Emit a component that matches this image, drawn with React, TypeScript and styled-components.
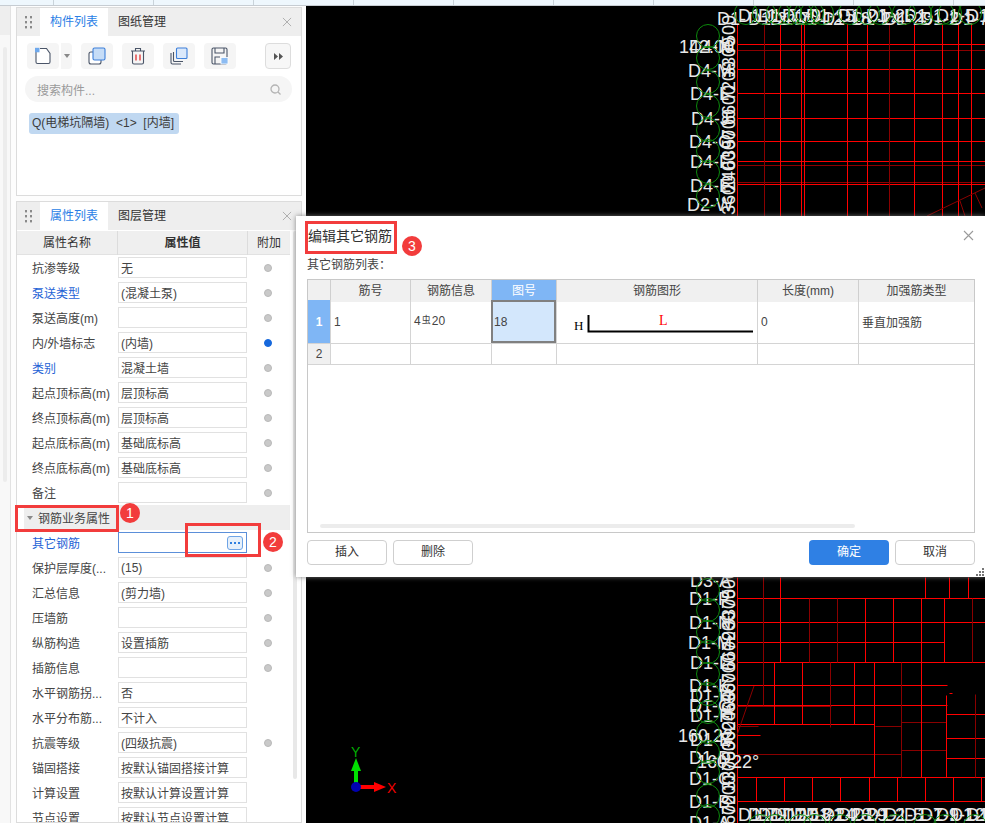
import React from "react";
import styled, { createGlobalStyle } from "styled-components";

const FONT = `"Liberation Sans", "Noto Sans CJK SC", sans-serif`;

const GlobalStyle = createGlobalStyle`
  html, body {
    margin: 0;
    padding: 0;
    background: #fff;
  }
  body {
    font-family: ${FONT};
    font-size: 12px;
    color: #333;
  }
  * {
    box-sizing: border-box;
  }
`;

const Page = styled.div`
  position: relative;
  width: 985px;
  height: 823px;
  overflow: hidden;
  display: flex;
  flex-direction: column;
`;

const TopStrip = styled.div`
  height: 6px;
  flex: none;
  background: repeating-linear-gradient(to right, #eef7fd 0, #eef7fd 53px, #c9d3da 53px, #c9d3da 54px, #eef7fd 54px, #eef7fd 100px);
  border-bottom: 1px solid #c6ccd2;
`;

const Main = styled.div`
  flex: 1;
  min-height: 0;
  display: flex;
`;

const Rail = styled.div`
  width: 11px;
  flex: none;
  background: #f8f8f8;
  border-right: 1px solid #e2e2e2;
`;

const RailHead = styled.div`
  height: 29px;
  background: #eeeeee;
`;

const RailThumb = styled.div`
  width: 4px;
  height: 435px;
  margin: 12px 0 0 3px;
  border-radius: 2px;
  background: #ececec;
`;

const Sidebar = styled.div`
  width: 295px;
  flex: none;
  padding: 1px 4px 0 5px;
  display: flex;
  flex-direction: column;
  gap: 5px;
  background: #fdfdfd;
`;

const Panel = styled.section<{ $grow?: boolean }>`
  display: flex;
  flex-direction: column;
  border: 1px solid #dcdcdc;
  background: #fff;
  ${(p) => (p.$grow ? "flex: 1; min-height: 0; overflow: hidden;" : "height: 189px; flex: none;")}
`;

const PanelHeader = styled.div`
  height: 28px;
  flex: none;
  display: flex;
  align-items: center;
  background: #eeeeee;
`;

const Grip = styled.div`
  width: 23px;
  display: flex;
  justify-content: center;
  color: #8a8a8a;
`;

const Tab = styled.div<{ $active?: boolean }>`
  width: 68px;
  height: 28px;
  line-height: 28px;
  text-align: center;
  font-size: 12px;
  background: ${(p) => (p.$active ? "#fff" : "transparent")};
  color: ${(p) => (p.$active ? "#2a7ee6" : "#333")};
`;

const HeaderClose = styled.div`
  margin-left: auto;
  margin-right: 9px;
  display: flex;
  color: #b0b0b0;
`;

const Toolbar = styled.div`
  display: flex;
  align-items: center;
  height: 26px;
  margin: 7px 0 0 10px;
  gap: 9px;
`;

const ToolButton = styled.div`
  width: 32px;
  height: 26px;
  display: flex;
  align-items: center;
  justify-content: center;
  border-radius: 4px;
  background: #f5f5f5;
`;

const SplitArrow = styled.div`
  width: 12px;
  height: 26px;
  margin-left: -8px;
  display: flex;
  align-items: center;
  justify-content: center;
  border-left: 1px solid #fff;
  border-radius: 0 4px 4px 0;
  background: #f5f5f5;
`;

const MoreButton = styled.div`
  width: 26px;
  height: 26px;
  margin-left: auto;
  margin-right: 10px;
  display: flex;
  align-items: center;
  justify-content: center;
  border: 1px solid #dddddd;
  border-radius: 4px;
  background: #f7f7f7;
`;

const SearchBox = styled.div`
  height: 26px;
  margin: 7px 9px 0 8px;
  padding: 0 11px 0 12px;
  display: flex;
  align-items: center;
  justify-content: space-between;
  border-radius: 13px;
  background: #f5f5f5;
  color: #9a9a9a;
`;

const Chip = styled.div`
  align-self: flex-start;
  height: 21px;
  margin: 11px 0 0 12px;
  padding: 0 5px 0 3px;
  line-height: 21px;
  font-size: 12px;
  white-space: pre;
  border-radius: 3px;
  background: #c0d8f1;
  color: #3c3c3c;
`;

const PropBody = styled.div`
  flex: 1;
  min-height: 0;
  display: flex;
`;

const PropTable = styled.div`
  width: 273px;
  flex: none;
`;

const PropHead = styled.div`
  height: 24px;
  margin-top: 1px;
  display: grid;
  grid-template-columns: 100px 130px 43px;
  background: #efefef;
  border-bottom: 1px solid #e2e2e2;
`;

const HeadCell = styled.div<{ $bold?: boolean }>`
  line-height: 24px;
  text-align: center;
  font-size: 12px;
  font-weight: ${(p) => (p.$bold ? 700 : 400)};
  border-left: 1px solid #dcdcdc;
  &:first-child {
    border-left: 0;
  }
`;

const PropRow = styled.div`
  height: 25px;
  display: grid;
  grid-template-columns: 101px 129px 43px;
  align-items: center;
`;

const PropName = styled.div<{ $link?: boolean }>`
  padding-left: 15px;
  font-size: 12px;
  white-space: nowrap;
  color: ${(p) => (p.$link ? "#1f63d6" : "#444")};
`;

const PropValue = styled.div<{ $focus?: boolean }>`
  height: 21px;
  padding: 0 2px;
  display: flex;
  align-items: center;
  justify-content: space-between;
  font-size: 12px;
  white-space: nowrap;
  color: #444;
  border: 1px solid ${(p) => (p.$focus ? "#5b8fd9" : "#e1e1e1")};
  background: #fff;
`;

const EllipsisButton = styled.div`
  width: 16px;
  height: 14px;
  margin-right: 1px;
  display: flex;
  align-items: center;
  justify-content: center;
  border: 1px solid #6ea4e6;
  border-radius: 3px;
  background: #e6f0fb;
`;

const Dot = styled.div<{ $on?: boolean }>`
  width: 8px;
  height: 8px;
  margin-left: 17px;
  border-radius: 50%;
  background: ${(p) => (p.$on ? "#1668dc" : "#c9c9c9")};
  border: 1px solid ${(p) => (p.$on ? "#1668dc" : "#b9b9b9")};
`;

const SectionRow = styled.div`
  height: 25px;
  margin-left: 7px;
  display: flex;
  align-items: center;
  gap: 5px;
  padding-left: 3px;
  width: 266px;
  font-size: 12px;
  background: #eeeeee;
  color: #444;
`;

const SectionCaret = styled.div`
  width: 0;
  height: 0;
  border-left: 3px solid transparent;
  border-right: 3px solid transparent;
  border-top: 4px solid #8a8a8a;
`;

const PropScroll = styled.div`
  width: 4px;
  height: 548px;
  margin: 1px 0 0 3px;
  border-radius: 2px;
  background: #e8e8e8;
`;

const Canvas = styled.div`
  flex: 1;
  min-width: 0;
  background: #000;
`;

const CanvasSvg = styled.svg`
  display: block;
  width: 679px;
  height: 817px;
`;

const Dialog = styled.div`
  position: absolute;
  left: 296px;
  top: 216px;
  width: 689px;
  height: 361px;
  padding: 0 10px 0 11px;
  display: flex;
  flex-direction: column;
  background: #fff;
  box-shadow: 0 0 5px rgba(120, 120, 120, 0.9);
`;

const DialogHeader = styled.div`
  height: 38px;
  flex: none;
  display: flex;
  align-items: center;
  justify-content: space-between;
  padding: 0 1px 0 1px;
  font-size: 14px;
  color: #333;
`;

const DialogClose = styled.div`
  display: flex;
  margin-top: 1px;
  color: #9a9a9a;
`;

const ListLabel = styled.div`
  height: 25px;
  font-size: 12px;
  line-height: 22px;
  color: #444;
`;

const Sheet = styled.div`
  position: relative;
  height: 254px;
  flex: none;
  border: 1px solid #c8c8c8;
`;

const SheetRow = styled.div<{ $height: number }>`
  height: ${(p) => p.$height}px;
  display: grid;
  grid-template-columns: 22px 80px 81px 65px 201px 101px 1fr;
  border-bottom: 1px solid #d4d4d4;
`;

const SheetHead = styled.div<{ $active?: boolean }>`
  line-height: 22px;
  text-align: center;
  font-size: 12px;
  border-left: 1px solid #cfcfcf;
  background: ${(p) => (p.$active ? "#7fb6f5" : "#f0f0f0")};
  color: ${(p) => (p.$active ? "#fff" : "#444")};
  &:first-child {
    border-left: 0;
  }
`;

const RowIndex = styled.div<{ $active?: boolean }>`
  display: flex;
  align-items: center;
  justify-content: center;
  font-size: 12px;
  font-weight: ${(p) => (p.$active ? 700 : 400)};
  background: ${(p) => (p.$active ? "#7fb6f5" : "#f0f0f0")};
  color: ${(p) => (p.$active ? "#fff" : "#444")};
`;

const SheetCell = styled.div<{ $selected?: boolean; $raised?: boolean }>`
  display: flex;
  align-items: center;
  padding-left: ${(p) => (p.$selected ? 1 : 3)}px;
  padding-bottom: ${(p) => (p.$raised ? 2 : 0)}px;
  font-size: 12px;
  color: #444;
  border-left: ${(p) => (p.$selected ? "0" : "1px solid #d4d4d4")};
  ${(p) => (p.$selected ? "border: 2px solid #808080; background: #d3e7fc;" : "")}
`;

const BarSymbol = styled.span`
  font-size: 9px;
  margin: 0 1px;
  position: relative;
  top: -1px;
`;

const ShapeCell = styled.div`
  position: relative;
  border-left: 1px solid #d4d4d4;
`;

const ShapeSvg = styled.svg`
  display: block;
  width: 200px;
  height: 43px;
`;

const SheetScroll = styled.div`
  position: absolute;
  left: 12px;
  bottom: 4px;
  width: 535px;
  height: 4px;
  border-radius: 2px;
  background: #ececec;
`;

const DialogFooter = styled.div`
  margin-top: 7px;
  display: flex;
  gap: 6px;
`;

const FooterButton = styled.div<{ $primary?: boolean; $pushRight?: boolean }>`
  width: 80px;
  height: 25px;
  text-align: center;
  font-size: 12px;
  border-radius: 4px;
  ${(p) => (p.$pushRight ? "margin-left: auto;" : "")}
  background: ${(p) => (p.$primary ? "#2f80e4" : "#fff")};
  color: ${(p) => (p.$primary ? "#fff" : "#333")};
  border: ${(p) => (p.$primary ? "0" : "1px solid #cfcfcf")};
  line-height: ${(p) => (p.$primary ? 25 : 23)}px;
`;

const ResizeGrip = styled.svg`
  position: absolute;
  right: 1px;
  bottom: 1px;
`;

const Callout = styled.div<{ $x: number; $y: number; $w: number; $h: number }>`
  position: absolute;
  left: ${(p) => p.$x}px;
  top: ${(p) => p.$y}px;
  width: ${(p) => p.$w}px;
  height: ${(p) => p.$h}px;
  border: 3px solid #f23c3c;
`;

const Badge = styled.div<{ $x: number; $y: number }>`
  position: absolute;
  left: ${(p) => p.$x}px;
  top: ${(p) => p.$y}px;
  width: 20px;
  height: 20px;
  line-height: 20px;
  text-align: center;
  font-size: 14px;
  border-radius: 50%;
  background: #f23c3c;
  color: #fff;
`;

const CloseIcon = ({ size = 11 }: { size?: number }) => (
  <svg width={size} height={size} viewBox="0 0 11 11">
    <path d="M1 1l9 9M10 1l-9 9" stroke="currentColor" strokeWidth="1.1" fill="none" />
  </svg>
);

const GripIcon = () => (
  <svg width="7" height="13" viewBox="0 0 7 13" fill="currentColor">
    {[0, 5, 10].map((y) => (
      <g key={y}>
        <rect x="0" y={y} width="2" height="2.4" />
        <rect x="5" y={y} width="2" height="2.4" />
      </g>
    ))}
  </svg>
);

const NewIcon = () => (
  <svg width="18" height="18" viewBox="0 0 18 18">
    <path d="M2 3.5V15a1.5 1.5 0 0 0 1.5 1.500h11a1.5 1.5 0 0 0 1.500-1.500V6.500L12.500 1.500H6" fill="#fff" stroke="#4a5568" strokeWidth="1.100" />
    <path d="M1 0.800h4.500v4.500H1z" fill="#6ea8ec" />
  </svg>
);

const CopyIcon = () => (
  <svg width="18" height="18" viewBox="0 0 18 18">
    <rect x="1" y="5" width="12" height="12" rx="2" fill="#fff" stroke="#4a5568" strokeWidth="1.100" />
    <rect x="5" y="1" width="12" height="12" rx="1.500" fill="#c5dcf7" stroke="#3d7fd9" strokeWidth="1.100" />
  </svg>
);

const TrashIcon = () => (
  <svg width="16" height="18" viewBox="0 0 16 18" fill="none">
    <path d="M1 4h14M5.500 4V1.500h5V4" stroke="#4a5568" strokeWidth="1.100" />
    <path d="M2.500 4v11.500a1.500 1.500 0 0 0 1.500 1.500h8a1.500 1.500 0 0 0 1.500-1.500V4" stroke="#4a5568" strokeWidth="1.100" />
    <path d="M6 7.500v6M10 7.500v6" stroke="#e02020" strokeWidth="1.200" />
  </svg>
);

const StackIcon = () => (
  <svg width="18" height="18" viewBox="0 0 18 18" fill="none">
    <path d="M1 6v9.500A1.500 1.500 0 0 0 2.500 17H11" stroke="#4a5568" strokeWidth="1.100" />
    <path d="M3.500 5v8.500A1 1 0 0 0 4.500 14.500H13" stroke="#4a5568" strokeWidth="1.100" />
    <rect x="6.500" y="1" width="10.500" height="10.500" rx="1" fill="#dbe9fb" stroke="#3d7fd9" strokeWidth="1.100" />
  </svg>
);

const SaveIcon = () => (
  <svg width="18" height="18" viewBox="0 0 18 18" fill="none">
    <rect x="1" y="1" width="15" height="16" rx="1.500" stroke="#4a5568" strokeWidth="1.100" />
    <path d="M4 1v5h9V1M4 17v-7h5" stroke="#4a5568" strokeWidth="1.100" />
    <rect x="10" y="10.500" width="7" height="6.500" fill="#8dbcf2" stroke="#fff" strokeWidth="0.800" />
  </svg>
);

const FastForwardIcon = () => (
  <svg width="9" height="7" viewBox="0 0 9 7" fill="#555">
    <path d="M0 0l4 3.500L0 7zM5 0l4 3.500L5 7z" />
  </svg>
);

const SearchIcon = () => (
  <svg width="11" height="11" viewBox="0 0 11 11" fill="none" stroke="#b4b4b4" strokeWidth="1.300">
    <circle cx="5" cy="5" r="4" />
    <path d="M8 8l2.500 2.500" />
  </svg>
);

type Prop = {
  name: string;
  value?: string;
  link?: boolean;
  dot?: "on" | "off";
};

const PROPS_TOP: Prop[] = [
  { name: "抗渗等级", value: "无", dot: "off" },
  { name: "泵送类型", value: "(混凝土泵)", link: true, dot: "off" },
  { name: "泵送高度(m)", dot: "off" },
  { name: "内/外墙标志", value: "(内墙)", dot: "on" },
  { name: "类别", value: "混凝土墙", link: true, dot: "off" },
  { name: "起点顶标高(m)", value: "层顶标高", dot: "off" },
  { name: "终点顶标高(m)", value: "层顶标高", dot: "off" },
  { name: "起点底标高(m)", value: "基础底标高", dot: "off" },
  { name: "终点底标高(m)", value: "基础底标高", dot: "off" },
  { name: "备注", dot: "off" },
];

const PROPS_BOTTOM: Prop[] = [
  { name: "保护层厚度(...", value: "(15)", dot: "off" },
  { name: "汇总信息", value: "(剪力墙)", dot: "off" },
  { name: "压墙筋", dot: "off" },
  { name: "纵筋构造", value: "设置插筋", dot: "off" },
  { name: "插筋信息", dot: "off" },
  { name: "水平钢筋拐...", value: "否" },
  { name: "水平分布筋...", value: "不计入" },
  { name: "抗震等级", value: "(四级抗震)", dot: "off" },
  { name: "锚固搭接", value: "按默认锚固搭接计算" },
  { name: "计算设置", value: "按默认计算设置计算" },
  { name: "节点设置", value: "按默认节点设置计算" },
];

const PropLine = ({ prop }: { prop: Prop }) => (
  <PropRow>
    <PropName $link={prop.link}>{prop.name}</PropName>
    <PropValue>{prop.value}</PropValue>
    {prop.dot ? <Dot $on={prop.dot === "on"} /> : <span />}
  </PropRow>
);

// CAD drawing data, in page coordinates
const RED = "#ff0000";
const DARK = "#8a0000";
const GREEN = "#0c8a0c";

const TOP_H: [number, string][] = [
  [44, RED], [50, DARK], [69, RED], [93, RED], [118, RED], [141, RED],
  [161, RED], [165, DARK], [182, DARK], [184, RED],
];
const TOP_V: [number, string][] = [
  [737, RED], [764, DARK], [780, RED], [801, RED], [804, RED], [847, RED],
  [867, RED], [889, DARK], [914, RED], [942, RED], [958, RED], [971, RED],
];

// x1, y1, x2, y2, colour
const LOW_LINES: [number, number, number, number, string][] = [
  [737, 577, 737, 823, RED],
  [737, 598, 985, 598, RED], [737, 622, 985, 622, RED], [737, 642, 944, 642, RED],
  [737, 662, 985, 662, RED], [737, 685, 947, 685, RED], [737, 705, 947, 705, RED],
  [737, 706, 831, 706, DARK], [737, 724, 874, 724, RED], [737, 726, 758, 726, DARK],
  [737, 735, 760, 735, RED], [737, 754, 901, 754, DARK], [875, 726, 901, 726, DARK],
  [901, 722, 946, 722, DARK], [901, 750, 946, 750, DARK], [946, 714, 985, 714, RED],
  [946, 738, 985, 738, RED], [946, 758, 985, 758, RED], [737, 777, 985, 777, RED],
  [737, 801, 985, 801, RED],
  [763, 577, 763, 705, DARK], [780, 577, 780, 662, RED], [809, 598, 809, 662, DARK],
  [837, 598, 837, 662, DARK], [865, 598, 865, 662, RED], [893, 598, 893, 662, RED],
  [921, 598, 921, 662, RED], [944, 598, 944, 662, RED], [972, 598, 972, 662, DARK],
  [925, 577, 925, 598, RED], [949, 577, 949, 598, RED], [968, 577, 968, 598, RED],
  [774, 662, 774, 724, RED], [802, 662, 802, 724, RED], [830, 662, 830, 727, DARK],
  [854, 662, 854, 724, RED], [874, 662, 874, 777, RED], [901, 662, 901, 777, DARK],
  [921, 662, 921, 777, RED], [946, 695, 946, 777, RED], [975, 694, 975, 777, DARK],
  [756, 801, 756, 777, RED], [784, 777, 784, 801, RED], [812, 777, 812, 801, RED],
  [840, 777, 840, 801, RED], [869, 777, 869, 801, RED], [897, 777, 897, 801, RED],
  [925, 777, 925, 801, RED], [953, 777, 953, 801, RED], [981, 777, 981, 801, RED],
  [949, 693, 952, 693, RED],
];

const LABELS_TOP: [string, number, number][] = [
  ["142.00", 679, 53], ["D4-N", 689, 53], ["D4-M", 688, 77], ["D4-L", 690, 100],
  ["D4-J", 691, 125], ["D4-G", 689, 148], ["D4-F", 690, 168], ["D4-E", 690, 192],
  ["D2-W", 687, 211],
];

const LABELS_LOW: [string, number, number][] = [
  ["D3-A", 690, 587], ["D1-P", 689, 605], ["D1-N", 689, 629], ["D1-M", 688, 649],
  ["D1-L", 690, 669], ["D1-K", 689, 692], ["D1-H", 690, 702], ["D1-G", 689, 712],
  ["D1-F", 690, 722], ["160.22", 678, 742], ["D1-E", 690, 746], ["160.22°", 697, 768],
  ["D1-D", 689, 764], ["D1-C", 689, 785], ["D1-B", 689, 808], ["D1-A", 689, 829],
];

const SIDE_Y = [36, 58, 82, 106, 130, 151, 172, 196, 590, 610, 632, 652, 674, 694, 712, 732, 752, 772, 796, 816];
const SIDE_NUMS = ["7500", "3300", "7200", "6600", "5700", "6300", "2400", "3600"];
const TOP_NUMS = ["D1-1", "D1-2", "D1-5", "D1-7", "D1-9", "D1-12", "D1-15", "D1-18", "D1-21", "D1-24", "D1-26", "D1-29"];
const TOP_X = [738, 748, 758, 770, 782, 794, 806, 822, 838, 852, 866, 884, 904, 920, 936, 950, 966];
const TOP_CIRCLES = [746, 764, 778, 790, 800, 806, 812, 822, 850, 868, 880, 904, 920, 942, 950, 970];
const BOTTOM_CIRCLES = [760, 775, 800, 815, 840, 865, 895, 925, 945, 975];

const CadDrawing = () => (
  <CanvasSvg viewBox="306 6 679 817">
    {/* half-pixel offsets keep the 1px lines on a single pixel row */}
    <g strokeWidth="1">
      {TOP_H.map(([y, c]) => (
        <line key={y} x1="737" y1={y + 0.5} x2="985" y2={y + 0.5} stroke={c} />
      ))}
      {TOP_V.map(([x, c]) => (
        <line key={x} x1={x + 0.5} y1="24" x2={x + 0.5} y2="216" stroke={c} />
      ))}
      {LOW_LINES.map(([x1, y1, x2, y2, c], i) => (
        <line key={i} x1={x1 + 0.5} y1={y1 + 0.5} x2={x2 + 0.5} y2={y2 + 0.5} stroke={c} />
      ))}
    </g>
    <path d="M927 216l58-28M960 201l5 15M975 193l7 15M737 735l17-49" stroke={DARK} fill="none" />
    <g fill="#e8e8e8" fontFamily="Liberation Sans, sans-serif" fontSize="18">
      {[...LABELS_TOP, ...LABELS_LOW].map(([t, x, y]) => (
        <text key={t + y} x={x} y={y}>
          {t}
        </text>
      ))}
      <text x="717" y="25">D1-</text>
      {TOP_X.map((x, i) => (
        <text key={x} x={x} y={i % 2 ? 25 : 22}>
          {TOP_NUMS[i % TOP_NUMS.length]}
        </text>
      ))}
      {TOP_X.map((x, i) => (
        <text key={x} x={x} y="821">
          {TOP_NUMS[(i + 3) % TOP_NUMS.length]}
        </text>
      ))}
      {SIDE_Y.map((y, i) => (
        <text key={i} transform={`translate(735 ${y + 19}) rotate(-90)`}>
          {SIDE_NUMS[i % SIDE_NUMS.length]}
        </text>
      ))}
    </g>
    <g fill="none" stroke={GREEN} strokeWidth="1">
      {SIDE_Y.map((y, i) => (
        <circle key={i} cx="708" cy={y} r="11.500" />
      ))}
      {TOP_CIRCLES.map((x, i) => (
        <circle key={i} cx={x} cy="13" r="11.500" />
      ))}
      {BOTTOM_CIRCLES.map((x, i) => (
        <circle key={i} cx={x} cy="826" r="11.500" />
      ))}
    </g>
    <line x1="356" y1="787" x2="356" y2="768" stroke="#00e000" strokeWidth="4" />
    <path d="M356 758l5 13h-10z" fill="#00e000" />
    <line x1="356" y1="787" x2="376" y2="787" stroke="#ff0000" strokeWidth="4" />
    <path d="M386 787l-12 5v-10z" fill="#ff0000" />
    <circle cx="356" cy="787" r="5" fill="#0000b0" />
    <text x="351" y="757" fontSize="14" fill="#00b000" fontFamily="Liberation Sans, sans-serif">Y</text>
    <text x="387" y="793" fontSize="14" fill="#f00000" fontFamily="Liberation Sans, sans-serif">X</text>
  </CanvasSvg>
);

export default function App() {
  return (
    <Page>
      <GlobalStyle />
      <TopStrip />
      <Main>
        <Rail>
          <RailHead />
          <RailThumb />
        </Rail>
        <Sidebar>
          <Panel>
            <PanelHeader>
              <Grip>
                <GripIcon />
              </Grip>
              <Tab $active>构件列表</Tab>
              <Tab>图纸管理</Tab>
              <HeaderClose>
                <CloseIcon size={10} />
              </HeaderClose>
            </PanelHeader>
            <Toolbar>
              <ToolButton>
                <NewIcon />
              </ToolButton>
              <SplitArrow>
                <svg width="6" height="4" viewBox="0 0 6 4" fill="#888">
                  <path d="M0 0h6L3 4z" />
                </svg>
              </SplitArrow>
              <ToolButton>
                <CopyIcon />
              </ToolButton>
              <ToolButton>
                <TrashIcon />
              </ToolButton>
              <ToolButton>
                <StackIcon />
              </ToolButton>
              <ToolButton>
                <SaveIcon />
              </ToolButton>
              <MoreButton>
                <FastForwardIcon />
              </MoreButton>
            </Toolbar>
            <SearchBox>
              搜索构件...
              <SearchIcon />
            </SearchBox>
            <Chip>Q(电梯坑隔墙)  &lt;1&gt;  [内墙]</Chip>
          </Panel>
          <Panel $grow>
            <PanelHeader>
              <Grip>
                <GripIcon />
              </Grip>
              <Tab $active>属性列表</Tab>
              <Tab>图层管理</Tab>
              <HeaderClose>
                <CloseIcon size={10} />
              </HeaderClose>
            </PanelHeader>
            <PropBody>
              <PropTable>
                <PropHead>
                  <HeadCell>属性名称</HeadCell>
                  <HeadCell $bold>属性值</HeadCell>
                  <HeadCell>附加</HeadCell>
                </PropHead>
                {PROPS_TOP.map((p) => (
                  <PropLine key={p.name} prop={p} />
                ))}
                <SectionRow>
                  <SectionCaret />
                  钢筋业务属性
                </SectionRow>
                <PropRow>
                  <PropName $link>其它钢筋</PropName>
                  <PropValue $focus>
                    <span />
                    <EllipsisButton>
                      <svg width="10" height="2" viewBox="0 0 10 2" fill="#2f7fe0">
                        <rect x="0" width="2" height="2" />
                        <rect x="4" width="2" height="2" />
                        <rect x="8" width="2" height="2" />
                      </svg>
                    </EllipsisButton>
                  </PropValue>
                  <span />
                </PropRow>
                {PROPS_BOTTOM.map((p) => (
                  <PropLine key={p.name} prop={p} />
                ))}
              </PropTable>
              <PropScroll />
            </PropBody>
          </Panel>
        </Sidebar>
        <Canvas>
          <CadDrawing />
        </Canvas>
      </Main>

      <Dialog>
        <DialogHeader>
          编辑其它钢筋
          <DialogClose>
            <CloseIcon />
          </DialogClose>
        </DialogHeader>
        <ListLabel>其它钢筋列表：</ListLabel>
        <Sheet>
          <SheetRow $height={20}>
            <SheetHead />
            <SheetHead>筋号</SheetHead>
            <SheetHead>钢筋信息</SheetHead>
            <SheetHead $active>图号</SheetHead>
            <SheetHead>钢筋图形</SheetHead>
            <SheetHead>长度(mm)</SheetHead>
            <SheetHead>加强筋类型</SheetHead>
          </SheetRow>
          <SheetRow $height={44}>
            <RowIndex $active>1</RowIndex>
            <SheetCell>1</SheetCell>
            <SheetCell $raised>
              4<BarSymbol>虫</BarSymbol>20
            </SheetCell>
            <SheetCell $selected>18</SheetCell>
            <ShapeCell>
              <ShapeSvg viewBox="0 0 200 43">
                <path d="M31.500 15v16.500H196" fill="none" stroke="#000" strokeWidth="2" />
                <text x="17" y="30" fontSize="13" fontFamily="Liberation Serif, serif" fill="#000">H</text>
                <text x="102" y="25" fontSize="14" fontFamily="Liberation Serif, serif" fill="#ff0000">L</text>
              </ShapeSvg>
            </ShapeCell>
            <SheetCell>0</SheetCell>
            <SheetCell>垂直加强筋</SheetCell>
          </SheetRow>
          <SheetRow $height={21}>
            <RowIndex>2</RowIndex>
            <SheetCell />
            <SheetCell />
            <SheetCell />
            <SheetCell />
            <SheetCell />
            <SheetCell />
          </SheetRow>
          <SheetScroll />
        </Sheet>
        <DialogFooter>
          <FooterButton>插入</FooterButton>
          <FooterButton>删除</FooterButton>
          <FooterButton $primary $pushRight>确定</FooterButton>
          <FooterButton>取消</FooterButton>
        </DialogFooter>
        <ResizeGrip width="9" height="9" viewBox="0 0 9 9" fill="#777">
          <rect x="7" y="1" width="2" height="2" />
          <rect x="4" y="4" width="2" height="2" />
          <rect x="7" y="4" width="2" height="2" />
          <rect x="1" y="7" width="2" height="2" />
          <rect x="4" y="7" width="2" height="2" />
          <rect x="7" y="7" width="2" height="2" />
        </ResizeGrip>
      </Dialog>

      <Callout $x={15} $y={505} $w={104} $h={27} />
      <Badge $x={120} $y={503}>1</Badge>
      <Callout $x={185} $y={523} $w={76} $h={34} />
      <Badge $x={263} $y={532}>2</Badge>
      <Callout $x={305} $y={221} $w={92} $h={33} />
      <Badge $x={402} $y={236}>3</Badge>
    </Page>
  );
}
